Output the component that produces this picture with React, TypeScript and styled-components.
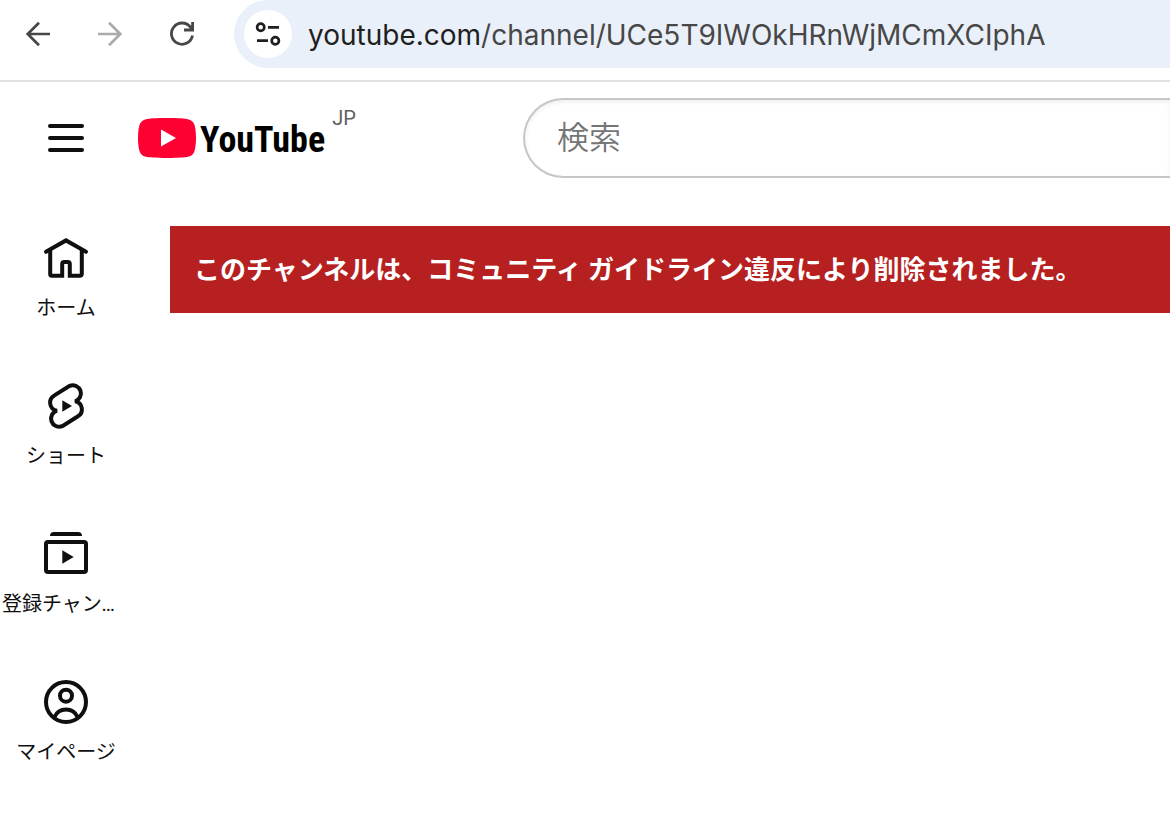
import React from "react";
import styled, { createGlobalStyle } from "styled-components";

const GlobalStyle = createGlobalStyle`
  *, *::before, *::after { box-sizing: border-box; }
  body {
    margin: 0;
    background: #fff;
    color: #0f0f0f;
    font-family: Roboto, "Noto Sans CJK JP", sans-serif;
    overflow-x: hidden;
  }
`;

const Toolbar = styled.header`
  display: flex;
  align-items: flex-start;
  height: 82px;
  border-bottom: 2px solid #e1e1e1;
`;

const ToolbarButtons = styled.div`
  display: flex;
  gap: 24px;
  padding: 10px 28px 0 14px;
`;

const IconButton = styled.button<{ $color?: string }>`
  display: flex;
  flex: none;
  width: 48px;
  height: 48px;
  padding: 0;
  border: 0;
  border-radius: 24px;
  background: #fff;
  color: ${(p) => p.$color ?? "#0f0f0f"};
`;

const Omnibox = styled.div`
  display: flex;
  flex: 1;
  align-items: center;
  min-width: 0;
  height: 68px;
  padding-left: 10px;
  border-radius: 34px 0 0 34px;
  background: #eaf0f9;
`;

const Url = styled.div`
  margin-left: 16px;
  padding-top: 2px;
  overflow: hidden;
  white-space: nowrap;
  font: 400 28px/40px Inter, sans-serif;
  color: #474747;
`;

const Host = styled.span`
  color: #1f1f1f;
`;

const Masthead = styled.div`
  display: flex;
  align-items: center;
  height: 112px;
`;

const MastheadStart = styled.div`
  display: flex;
  flex: none;
  align-items: center;
  gap: 48px;
  width: 523px;
  padding-left: 42px;
`;

const LogoLink = styled.a`
  display: flex;
  align-items: center;
  height: 56px;
  color: #000;
  text-decoration: none;
`;

const Wordmark = styled.span`
  margin-left: 4px;
  padding-top: 4px;
  font: 700 36px/40px "Roboto Condensed", "Liberation Sans Narrow", "Open Sans Condensed", sans-serif;
`;

const Country = styled.span`
  align-self: flex-start;
  margin-left: 7px;
  font-size: 20px;
  line-height: 16px;
  color: #606060;
`;

const SearchInput = styled.input`
  flex: 1;
  min-width: 0;
  height: 80px;
  padding: 0 0 6px 32px;
  border: 2px solid #c6c6c6;
  border-right: 0;
  border-radius: 40px 0 0 40px;
  outline: 0;
  background: #fff;
  box-shadow: inset 0 2px 4px #eee;
  font: 350 32px/48px "Noto Sans CJK JP", sans-serif;
  color: #0f0f0f;
  &::placeholder { color: #757575; opacity: 1; }
`;

const Body = styled.div`
  display: flex;
  align-items: flex-start;
`;

const Guide = styled.nav`
  flex: none;
  width: 132px;
  padding-top: 8px;
`;

const GuideItem = styled.a`
  display: flex;
  flex-direction: column;
  align-items: center;
  height: 148px;
  padding: 32px 2px 26px;
  color: #0f0f0f;
  text-decoration: none;
`;

const GuideLabel = styled.span`
  max-width: 100%;
  margin-top: 12px;
  overflow: hidden;
  text-overflow: ellipsis;
  white-space: nowrap;
  font-size: 20px;
  line-height: 28px;
`;

const Main = styled.main`
  flex: 1;
  min-width: 0;
  padding: 32px 0 0 38px;
`;

const Alert = styled.div`
  padding: 24px 24px 23px;
  background: #b72020;
  color: #fff;
  font-size: 26px;
  font-weight: 700;
  line-height: 40px;
`;

const Icon = ({ children }: { children: React.ReactNode }) => (
  <svg width="48" height="48" viewBox="0 0 48 48" fill="none" stroke="currentColor" strokeWidth="4" aria-hidden="true">
    {children}
  </svg>
);

const BackIcon = () => (
  <Icon>
    <path d="M36 24H14M25 12.7L13.7 24L25 35.3" strokeWidth="2.7" />
  </Icon>
);

const ForwardIcon = () => (
  <Icon>
    <path d="M12 24H34M23 12.7L34.3 24L23 35.3" strokeWidth="2.7" />
  </Icon>
);

const ReloadIcon = () => (
  <Icon>
    <path d="M34.5 25.5A10.6 10.6 0 1 1 32.5 17.2L34 19.3M34.6 12V20H26" strokeWidth="2.8" />
  </Icon>
);

const SiteInfoIcon = () => (
  <Icon>
    <g strokeWidth="2.7">
      <circle cx="16.7" cy="17.3" r="3.6" />
      <path d="M24 17.3H35M13 30.7H24" />
      <circle cx="31.3" cy="30.7" r="3.6" />
    </g>
  </Icon>
);

const MenuIcon = () => (
  <Icon>
    <path d="M8 12H40M8 24H40M8 36H40" strokeLinecap="round" />
  </Icon>
);

const HomeIcon = () => (
  <Icon>
    <path d="M4 17.8L24 6.4L44 17.8" strokeLinecap="round" />
    <path d="M8.2 16V40a1.8 1.8 0 0 0 1.8 1.8H20.2V30a2 2 0 0 1 2-2h3.6a2 2 0 0 1 2 2V41.8H38a1.8 1.8 0 0 0 1.8-1.8V16" />
  </Icon>
);

const ShortsIcon = () => (
  <Icon>
    <path d="M12.4 13.4L27.7 3.8A8.2 8.2 0 1 1 33 19.3A8.2 8.2 0 0 1 35.6 34.6L20.3 44.2A8.2 8.2 0 1 1 15 28.7A8.2 8.2 0 0 1 12.4 13.4Z" />
    <path d="M20.3 18.2V29.8L30 24Z" fill="currentColor" stroke="none" />
  </Icon>
);

const SubscriptionsIcon = () => (
  <Icon>
    <path d="M8 6a4 4 0 0 1 4-4H36a4 4 0 0 1 4 4Z" fill="currentColor" stroke="none" />
    <rect x="4" y="12" width="40" height="30" rx="2" />
    <path d="M20.3 20.3V33.7L31.7 27Z" fill="currentColor" stroke="none" />
  </Icon>
);

const ProfileIcon = () => (
  <Icon>
    <circle cx="24" cy="24" r="20" />
    <circle cx="24" cy="17.7" r="6" />
    <path d="M12.5 39A12.6 12.6 0 0 1 35.5 39" />
  </Icon>
);

const LogoMark = () => (
  <svg width="58" height="40" viewBox="0 0 58 40" aria-hidden="true">
    <path
      d="M29 0C41 0 47 .5 50 1.2C54 2 56 4.5 56.8 8C58.4 15 58.4 25 56.8 32C56 35.5 54 38 50 38.8C47 39.5 41 40 29 40S11 39.5 8 38.8C4 38 2 35.5 1.2 32C-.4 25-.4 15 1.2 8C2 4.5 4 2 8 1.2C11 .5 17 0 29 0Z"
      fill="#f03"
    />
    <path d="M23 11.5V28.5L38 20Z" fill="#fff" />
  </svg>
);

const guide = [
  { label: "ホーム", Glyph: HomeIcon },
  { label: "ショート", Glyph: ShortsIcon },
  { label: "登録チャンネル", Glyph: SubscriptionsIcon },
  { label: "マイページ", Glyph: ProfileIcon },
];

export default function App() {
  return (
    <>
      <GlobalStyle />
      <Toolbar>
        <ToolbarButtons>
          <IconButton $color="#474747" aria-label="戻る"><BackIcon /></IconButton>
          <IconButton $color="#ababab" aria-label="進む"><ForwardIcon /></IconButton>
          <IconButton $color="#474747" aria-label="再読み込み"><ReloadIcon /></IconButton>
        </ToolbarButtons>
        <Omnibox>
          <IconButton $color="#1f1f1f" aria-label="サイト情報"><SiteInfoIcon /></IconButton>
          <Url><Host>youtube.com</Host>/channel/UCe5T9IWOkHRnWjMCmXCIphA</Url>
        </Omnibox>
      </Toolbar>
      <Masthead>
        <MastheadStart>
          <IconButton aria-label="ガイド"><MenuIcon /></IconButton>
          <LogoLink href="#">
            <LogoMark />
            <Wordmark>YouTube</Wordmark>
            <Country>JP</Country>
          </LogoLink>
        </MastheadStart>
        <SearchInput type="text" placeholder="検索" aria-label="検索" />
      </Masthead>
      <Body>
        <Guide>
          {guide.map(({ label, Glyph }) => (
            <GuideItem href="#" key={label}>
              <Glyph />
              <GuideLabel>{label}</GuideLabel>
            </GuideItem>
          ))}
        </Guide>
        <Main>
          <Alert role="alert">このチャンネルは、コミュニティ ガイドライン違反により削除されました。</Alert>
        </Main>
      </Body>
    </>
  );
}
